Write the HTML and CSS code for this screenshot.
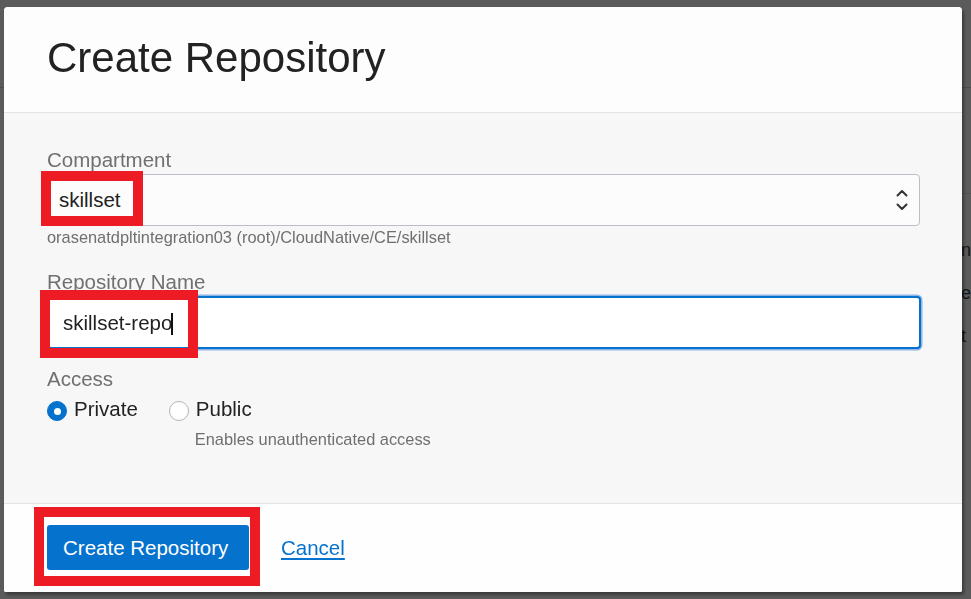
FILE: index.html
```html
<!DOCTYPE html>
<html lang="en">
<head>
<meta charset="utf-8">
<title>Create Repository</title>
<link rel="stylesheet" href="styles.css">
</head>
<body>
<div class="page">
  <div class="page-top"></div>
  <div class="page-main">
    <div class="page-content"></div>
    <div class="page-side">
      <p>n</p>
      <p>e</p>
      <p>t</p>
    </div>
  </div>
</div>

<div class="backdrop">
  <div class="dialog">
    <header class="dlg-head">
      <h1 class="dlg-title">Create Repository</h1>
    </header>

    <div class="dlg-body">
      <div class="lbl">Compartment</div>
      <div class="select-wrap">
        <div class="select">skillset</div>
        <svg class="chev" width="14" height="24" viewBox="0 0 14 24" aria-hidden="true">
          <path d="M2.5 7.5 L7 3 L11.5 7.5" fill="none" stroke="#333" stroke-width="2" stroke-linecap="round" stroke-linejoin="round"/>
          <path d="M2.5 16.5 L7 21 L11.5 16.5" fill="none" stroke="#333" stroke-width="2" stroke-linecap="round" stroke-linejoin="round"/>
        </svg>
        <span class="mark mark-comp"></span>
      </div>
      <div class="help">orasenatdpltintegration03 (root)/CloudNative/CE/skillset</div>

      <div class="lbl lbl-gap">Repository Name</div>
      <div class="input-wrap">
        <div class="input">skillset-repo<span class="caret"></span></div>
        <span class="mark mark-name"></span>
      </div>

      <div class="lbl lbl-access">Access</div>
      <div class="radios">
        <div class="radio">
          <span class="dot dot-on"></span>
          <span class="radio-text">Private</span>
        </div>
        <div class="radio radio-public">
          <span class="dot"></span>
          <div class="radio-col">
            <span class="radio-text">Public</span>
            <span class="help help-radio">Enables unauthenticated access</span>
          </div>
        </div>
      </div>
    </div>

    <footer class="dlg-foot">
      <div class="btn-wrap">
        <button class="btn" type="button">Create Repository</button>
        <span class="mark mark-btn"></span>
      </div>
      <a class="link" href="#">Cancel</a>
    </footer>
  </div>
</div>
</body>
</html>
```

FILE: styles.css
```css
* { box-sizing: border-box; }

html, body {
  margin: 0;
  padding: 0;
  width: 971px;
  height: 599px;
  overflow: hidden;
  background: #5b5b5b;
  font-family: "Liberation Sans", Arial, sans-serif;
}

/* dimmed page behind the modal */
.page {
  height: 599px;
  display: flex;
  flex-direction: column;
}
.page-top {
  height: 88px;
  border-bottom: 1px solid #4c4c4c;
}
.page-main {
  flex: 1;
  display: grid;
  grid-template-columns: 961px 10px;
}
.page-side {
  padding-top: 44px;
  border-top: 1px solid #505050;
  margin-top: 105px;
}
.page-side p {
  margin: 0 0 19px 0;
  font-size: 18px;
  line-height: 24px;
  color: #151515;
}

/* modal */
.backdrop {
  position: fixed;
  inset: 0;
  padding: 7px 0 0 4px;
}
.dialog {
  width: 958px;
  height: 585px;
  display: flex;
  flex-direction: column;
  background: #f7f7f7;
  border-radius: 4px 4px 2px 2px;
  box-shadow: 2px 3px 3px rgba(0, 0, 0, 0.35);
  overflow: hidden;
}

.dlg-head {
  background: #fdfdfd;
  padding: 27px 43px 30px;
  border-bottom: 1px solid #e3e3e3;
}
.dlg-title {
  margin: 0;
  font-weight: normal;
  font-size: 42px;
  line-height: 48px;
  color: #222;
}

.dlg-body {
  flex: 1;
  padding: 35px 42px 0 43px;
}

.lbl {
  font-size: 20.5px;
  line-height: 24px;
  color: #707070;
  margin-bottom: 2px;
}
.lbl-gap { margin-top: 23px; }
.lbl-access { margin-top: 18px; margin-bottom: 0; }

.select-wrap,
.input-wrap,
.btn-wrap {
  position: relative;
}

.select {
  height: 52px;
  width: 873px;
  border: 1px solid #b9bec7;
  border-radius: 4px;
  background: #fcfcfc;
  padding: 13px 11px;
  font-size: 20.5px;
  line-height: 24px;
  color: #222;
}
.chev {
  position: absolute;
  right: 11px;
  top: 14px;
}

.help {
  margin-top: 1px;
  font-size: 16.4px;
  line-height: 20px;
  color: #6f6f6f;
}

.input {
  height: 53px;
  width: 874px;
  border: 2px solid #0572ce;
  border-radius: 4px;
  box-shadow: 0 0 0 1.5px #8cb5e6;
  background: #fff;
  padding: 12.5px 14px;
  font-size: 20.5px;
  line-height: 24px;
  color: #222;
}
.caret {
  display: inline-block;
  width: 1.5px;
  height: 22px;
  background: #111;
  vertical-align: -5px;
  margin-left: -1px;
}

.radios {
  margin-top: 6px;
  display: flex;
  align-items: flex-start;
  gap: 31px;
}
.radio {
  display: flex;
  align-items: flex-start;
  gap: 7px;
}
.dot {
  width: 20px;
  height: 20px;
  margin-top: 4px;
  border-radius: 50%;
  border: 1px solid #b5b5b5;
  background: #fff;
  display: flex;
  align-items: center;
  justify-content: center;
  flex: none;
}
.dot-on {
  border-color: #0572ce;
  background: #0572ce;
}
.dot-on::after {
  content: "";
  width: 7px;
  height: 7px;
  border-radius: 50%;
  background: #fff;
}
.radio-text {
  font-size: 20.5px;
  line-height: 24px;
  color: #222;
}
.radio-col {
  display: flex;
  flex-direction: column;
}
.help-radio {
  margin-top: 8px;
  margin-left: -1px;
}

.dlg-foot {
  background: #fefefe;
  border-top: 1px solid #e3e3e3;
  height: 89px;
  padding: 21px 43px 22px;
  display: flex;
  align-items: center;
  gap: 32px;
}
.btn {
  display: block;
  height: 45px;
  width: 202px;
  border: none;
  border-radius: 3px;
  background: #0572ce;
  color: #fff;
  font-family: inherit;
  font-size: 20.5px;
  line-height: 24px;
  padding: 0 16px;
  text-align: left;
  white-space: nowrap;
}
.link {
  font-size: 20.5px;
  line-height: 24px;
  color: #0572ce;
  text-decoration: underline;
  text-underline-offset: 3px;
}

/* red annotation frames */
.mark {
  position: absolute;
  border: 10px solid #ed1c24;
  pointer-events: none;
}
.mark-comp {
  left: -6px;
  top: -3px;
  width: 102px;
  height: 55px;
}
.mark-name {
  left: -7px;
  top: -6px;
  width: 158px;
  height: 68px;
}
.mark-btn {
  left: -13px;
  top: -18px;
  width: 226px;
  height: 79px;
}
```
